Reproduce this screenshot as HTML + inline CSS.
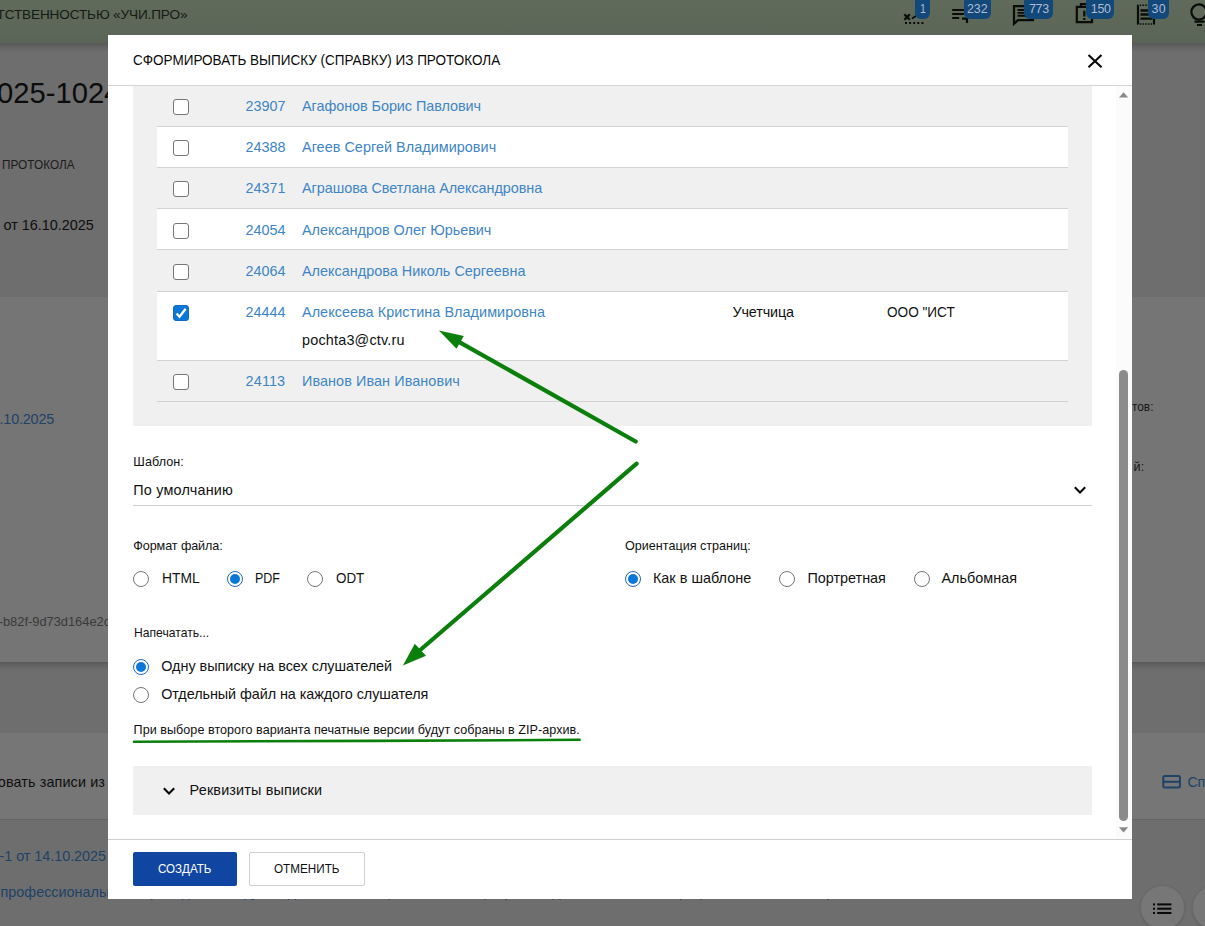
<!DOCTYPE html>
<html lang="ru">
<head>
<meta charset="utf-8">
<title>Сформировать выписку (справку) из протокола</title>
<style>
html,body{margin:0;padding:0;}
body{width:1205px;height:926px;overflow:hidden;position:relative;background:#6e6e6e;font-family:"Liberation Sans",sans-serif;}
.abs{position:absolute;}
.t{position:absolute;white-space:nowrap;line-height:20px;font-family:"Liberation Sans",sans-serif;}
#bg{position:absolute;left:0;top:0;width:1205px;height:926px;overflow:hidden;z-index:0;}
#modal{position:absolute;left:108px;top:35px;width:1024px;height:864px;background:#fff;z-index:5;overflow:hidden;}
#mt{position:absolute;left:0;top:0;width:1205px;height:926px;z-index:6;overflow:hidden;}
#mt .t{z-index:6;}
#bg .t{z-index:3;}
.band{position:absolute;left:0;width:1205px;}
.badge{position:absolute;top:-6px;height:24.6px;background:#12487a;border-radius:6px;z-index:2;}
.row{position:absolute;left:49px;width:911px;border-bottom:1px solid #d2d2d2;box-sizing:border-box;}
.row.w{background:#fff;}
.cb{position:absolute;width:16px;height:16px;box-sizing:border-box;border:1px solid #767676;border-radius:3px;background:#fff;left:173px;}
.cb.on{background:#0a78d8;border-color:#1468bd;}
.rd{position:absolute;width:16px;height:16px;box-sizing:border-box;border:1px solid #767676;border-radius:50%;background:#fff;}
.rd.on{border:1px solid #2268b8;}
.rd.on::after{content:"";position:absolute;left:2px;top:2px;width:10px;height:10px;border-radius:50%;background:#0a78d8;}
svg{position:absolute;overflow:visible;}
</style>
</head>
<body>
<div id="bg">
  <!-- page background bands (already dimmed by overlay) -->
  <div class="band" style="top:0;height:296.5px;background:#6e6e6e;"></div>
  <div class="band" style="top:296.5px;height:365.5px;background:#757575;"></div>
  <div class="band" style="top:662px;height:70.6px;background:linear-gradient(#595959 0,#626262 3px,#6b6b6b 7px,#6e6e6e 10px,#6e6e6e 100%);"></div>
  <div class="band" style="top:732.6px;height:86.4px;background:#767676;"></div>
  <div class="band" style="top:819px;height:107px;background:#6e6e6e;border-top:1px solid #646464;box-sizing:border-box;"></div>
  <!-- app header -->
  <div class="band" style="top:43px;height:10px;background:linear-gradient(#575757 0,#606060 3px,#6a6a6a 7px,#6e6e6e 10px);z-index:1;"></div>
  <div class="band" style="top:0;height:43px;background:linear-gradient(#5f6a5b 0,#5d6859 50%,#5a6557 100%);z-index:1;"></div>
  <div id="hdr" style="position:absolute;left:0;top:0;width:1205px;height:43px;z-index:2;">
<div class="badge" style="left:915.0px;width:15.0px"></div>
<div class="badge" style="left:963.6px;width:27.4px"></div>
<div class="badge" style="left:1024.3px;width:28.7px"></div>
<div class="badge" style="left:1086.0px;width:27.8px"></div>
<div class="badge" style="left:1147.7px;width:21.1px"></div>

    <svg id="icons" width="1205" height="43" viewBox="0 0 1205 43" style="left:0;top:0;z-index:1" fill="none" stroke="#0a0c09" stroke-width="2.2">
      <!-- icon 1: x + dotted line -->
      <path d="M904.4 14.4l5.4 5.4M909.8 14.4l-5.4 5.4" stroke-width="2.2"/>
      <path d="M912 18.5l4-2.5" stroke-width="2"/>
      <path d="M905 23h19" stroke-dasharray="2 2.1"/>
      <!-- icon 2: playlist add -->
      <path d="M952.2 10h12M952.2 14h12M952.2 18h7M962 18.6h5v4.4"/>
      <!-- icon 3: chat -->
      <path d="M1014 6.2h19v14h-15l-4 3.6z"/>
      <path d="M1017.5 10h13M1017.5 12.9h13M1017.5 15.8h9" stroke-width="1.9"/>
      <!-- icon 4: assignment late -->
      <path d="M1076.8 6.8h15.2v15.4h-15.2z"/>
      <path d="M1081 6.5v-2.5h7v2.5" />
      <path d="M1084.3 10.8v5.6M1084.3 18v2"/>
      <!-- icon 5: receipt -->
      <path d="M1138 5.4v18.6M1154 5.4v18.6" />
      <path d="M1137 5.2h18M1137 24h18" stroke-dasharray="1.5 1.2" stroke-width="1.6"/>
      <path d="M1140.5 10.5h12M1140.5 14.5h12M1140.5 18.6h12" stroke-width="2.4"/>
      <!-- icon 6: bulb -->
      <circle cx="1199" cy="12" r="7.6"/>
      <path d="M1194.5 21.6h10M1197 25h5" />
    </svg>
  </div>
<span class="t" id="h1" style="left:-3.50px;top:5.19px;font-size:13.6px;color:#161a14;letter-spacing:-0.139px;">ТСТВЕННОСТЬЮ «УЧИ.ПРО»</span>
<span class="t" id="num" style="left:-3.00px;top:83.48px;font-size:29.2px;color:#0c0c0c;">025-1024</span>
<span class="t" id="prot" style="left:2.10px;top:154.57px;font-size:12.5px;color:#1c1c1c;transform:scaleX(0.9442);transform-origin:0 50%;">ПРОТОКОЛА</span>
<span class="t" id="ot" style="left:3.60px;top:214.71px;font-size:14.4px;color:#0e0e0e;letter-spacing:-0.009px;">от 16.10.2025</span>
<span class="t" id="d10" style="left:-0.50px;top:408.91px;font-size:14.4px;color:#1e4268;letter-spacing:-0.186px;">.10.2025</span>
<span class="t" id="uuid" style="left:-1.30px;top:611.95px;font-size:12.85px;color:#3a3a3a;">-b82f-9d73d164e2c5</span>
<span class="t" id="zap" style="left:-2.20px;top:772.01px;font-size:14.4px;color:#0e0e0e;letter-spacing:0.107px;">овать записи из</span>
<span class="t" id="l1" style="left:-0.50px;top:846.01px;font-size:14.4px;color:#1e4268;letter-spacing:-0.040px;">-1 от 14.10.2025</span>
<span class="t" id="l2" style="left:0.50px;top:881.61px;font-size:14.4px;color:#1e4268;">профессиональная переподготовка руководителей и специалистов по программе дополнительного профессионального образования</span>
<span class="t" id="tov" style="left:1131.50px;top:396.63px;font-size:12.6px;color:#161616;transform:scaleX(0.9391);transform-origin:0 50%;">тов:</span>
<span class="t" id="iy" style="left:1133.60px;top:457.33px;font-size:12.6px;color:#161616;">й:</span>
<span class="t" id="sp" style="left:1187.60px;top:771.61px;font-size:14.4px;color:#1e4268;letter-spacing:-0.6px;">Список</span>
<span class="t" id="bd0" style="left:919.50px;top:-1.20px;font-size:12.4px;color:#b2bccf;transform:scaleX(0.8571);transform-origin:0 50%;z-index:3;">1</span>
<span class="t" id="bd1" style="left:967.00px;top:-1.20px;font-size:12.4px;color:#b2bccf;letter-spacing:-0.050px;z-index:3;">232</span>
<span class="t" id="bd2" style="left:1029.00px;top:-1.20px;font-size:12.4px;color:#b2bccf;letter-spacing:-0.288px;z-index:3;">773</span>
<span class="t" id="bd3" style="left:1090.80px;top:-1.20px;font-size:12.4px;color:#b2bccf;letter-spacing:-0.312px;z-index:3;">150</span>
<span class="t" id="bd4" style="left:1151.60px;top:-1.20px;font-size:12.4px;color:#b2bccf;letter-spacing:0.200px;z-index:3;">30</span>
  <!-- "Список" icon -->
  <svg width="20" height="16" viewBox="0 0 20 16" style="left:1162px;top:774px" fill="none" stroke="#1e4268" stroke-width="2"><rect x="1.3" y="2" width="16.6" height="11.6" rx="1.5"/><path d="M1.3 7.8h16.6"/></svg>
  <!-- floating buttons -->
  <div class="abs" style="left:1140.5px;top:885.5px;width:43px;height:43px;border-radius:50%;background:#777;box-shadow:0 0 0 1px #6a6a6a,0 1px 3px rgba(0,0,0,.25);"></div>
  <div class="abs" style="left:1193px;top:885.5px;width:43px;height:43px;border-radius:50%;background:#777;box-shadow:0 0 0 1px #6a6a6a,0 1px 3px rgba(0,0,0,.25);"></div>
  <svg width="20" height="12" viewBox="0 0 20 12" style="left:1152.6px;top:903.2px" fill="#080808"><rect x="0" y="0.4" width="2" height="2"/><rect x="0" y="4.7" width="2" height="2"/><rect x="0" y="9" width="2" height="2"/><rect x="4.2" y="0.4" width="14.2" height="2"/><rect x="4.2" y="4.7" width="14.2" height="2"/><rect x="4.2" y="9" width="14.2" height="2"/></svg>
</div>

<div id="modal">
  <!-- header border -->
  <div class="abs" style="left:0;top:50px;width:1024px;height:1px;background:#d4d4d4;"></div>
  <!-- grey list panel -->
  <div class="abs" style="left:25px;top:51px;width:959px;height:339.6px;background:#f0f0f0;"></div>
  <div class="row" style="top:51px;height:41px;"></div>
  <div class="row w" style="top:92px;height:41px;"></div>
  <div class="row" style="top:133px;height:41px;"></div>
  <div class="row w" style="top:174px;height:41px;"></div>
  <div class="row" style="top:215px;height:42px;"></div>
  <div class="row w" style="top:257px;height:68.5px;"></div>
  <div class="row" style="top:325.5px;height:41.5px;"></div>
  <!-- select underline -->
  <div class="abs" style="left:25px;top:470px;width:959px;height:1px;background:#cfcfcf;"></div>
  <!-- accordion -->
  <div class="abs" style="left:25px;top:731px;width:959px;height:48.6px;background:#f0f0f0;"></div>
  <!-- footer -->
  <div class="abs" style="left:0;top:804px;width:1024px;height:1px;background:#d0d0d0;"></div>
  <div class="abs" style="left:25px;top:817.2px;width:103.8px;height:33.6px;background:#1046a2;border-radius:2px;"></div>
  <div class="abs" style="left:141px;top:817.2px;width:115.6px;height:33.6px;background:#fff;border:1px solid #cfcfcf;border-radius:2px;box-sizing:border-box;"></div>
  <!-- scrollbar -->
  <div class="abs" style="left:1008px;top:51px;width:16px;height:753px;background:#fbfbfb;"></div>
  <div class="abs" style="left:1011px;top:335px;width:9px;height:451px;border-radius:4.5px;background:#8b8b8b;"></div>
  <svg width="10" height="6" viewBox="0 0 10 6" style="left:1010.9px;top:56.8px"><path d="M0 5.4L4.6 0.2L9.2 5.4z" fill="#8a8a8a"/></svg>
  <svg width="10" height="6" viewBox="0 0 10 6" style="left:1010.9px;top:792px"><path d="M0 0.2L4.6 5.4L9.2 0.2z" fill="#8a8a8a"/></svg>
</div>

<div id="mt">
<span class="t" id="title" style="left:133.00px;top:50.41px;font-size:14.4px;color:#0a0a0a;transform:scaleX(0.9391);transform-origin:0 50%;">СФОРМИРОВАТЬ ВЫПИСКУ (СПРАВКУ) ИЗ ПРОТОКОЛА</span>
<span class="t" id="id0" style="left:245.60px;top:96.11px;font-size:14.4px;color:#3d85c6;">23907</span>
<span class="t" id="nm0" style="left:302.00px;top:96.11px;font-size:14.4px;color:#3d85c6;letter-spacing:-0.047px;">Агафонов Борис Павлович</span>
<span class="t" id="id1" style="left:245.60px;top:137.21px;font-size:14.4px;color:#3d85c6;">24388</span>
<span class="t" id="nm1" style="left:302.00px;top:137.21px;font-size:14.4px;color:#3d85c6;letter-spacing:0.043px;">Агеев Сергей Владимирович</span>
<span class="t" id="id2" style="left:245.60px;top:178.41px;font-size:14.4px;color:#3d85c6;">24371</span>
<span class="t" id="nm2" style="left:302.00px;top:178.41px;font-size:14.4px;color:#3d85c6;letter-spacing:-0.041px;">Аграшова Светлана Александровна</span>
<span class="t" id="id3" style="left:245.60px;top:219.51px;font-size:14.4px;color:#3d85c6;">24054</span>
<span class="t" id="nm3" style="left:302.00px;top:219.51px;font-size:14.4px;color:#3d85c6;letter-spacing:-0.009px;">Александров Олег Юрьевич</span>
<span class="t" id="id4" style="left:245.60px;top:260.91px;font-size:14.4px;color:#3d85c6;">24064</span>
<span class="t" id="nm4" style="left:302.00px;top:260.91px;font-size:14.4px;color:#3d85c6;letter-spacing:0.022px;">Александрова Николь Сергеевна</span>
<span class="t" id="id5" style="left:245.60px;top:302.01px;font-size:14.4px;color:#3d85c6;">24444</span>
<span class="t" id="nm5" style="left:302.00px;top:302.01px;font-size:14.4px;color:#3d85c6;letter-spacing:0.057px;">Алексеева Кристина Владимировна</span>
<span class="t" id="id6" style="left:245.60px;top:370.61px;font-size:14.4px;color:#3d85c6;letter-spacing:0.141px;">24113</span>
<span class="t" id="nm6" style="left:302.00px;top:370.61px;font-size:14.4px;color:#3d85c6;letter-spacing:0.086px;">Иванов Иван Иванович</span>
<span class="t" id="mail" style="left:302.00px;top:330.21px;font-size:14.4px;color:#111;letter-spacing:0.196px;">pochta3@ctv.ru</span>
<span class="t" id="uch" style="left:732.40px;top:302.01px;font-size:14.4px;color:#111;letter-spacing:-0.126px;">Учетчица</span>
<span class="t" id="ooo" style="left:887.20px;top:302.01px;font-size:14.4px;color:#111;transform:scaleX(0.9444);transform-origin:0 50%;">ООО "ИСТ</span>
<span class="t" id="shab" style="left:133.30px;top:452.23px;font-size:12.6px;color:#111;letter-spacing:0.050px;">Шаблон:</span>
<span class="t" id="def" style="left:133.30px;top:480.11px;font-size:14.4px;color:#111;letter-spacing:0.205px;">По умолчанию</span>
<span class="t" id="fmt" style="left:133.30px;top:535.93px;font-size:12.6px;color:#111;letter-spacing:-0.089px;">Формат файла:</span>
<span class="t" id="html" style="left:161.60px;top:567.91px;font-size:14.4px;color:#111;transform:scaleX(0.9590);transform-origin:0 50%;">HTML</span>
<span class="t" id="pdf" style="left:254.80px;top:567.91px;font-size:14.4px;color:#111;transform:scaleX(0.8690);transform-origin:0 50%;">PDF</span>
<span class="t" id="odt" style="left:335.60px;top:567.91px;font-size:14.4px;color:#111;transform:scaleX(0.9300);transform-origin:0 50%;">ODT</span>
<span class="t" id="ori" style="left:625.00px;top:535.93px;font-size:12.6px;color:#111;">Ориентация страниц:</span>
<span class="t" id="o1" style="left:652.90px;top:567.91px;font-size:14.4px;color:#111;letter-spacing:0.027px;">Как в шаблоне</span>
<span class="t" id="o2" style="left:807.50px;top:567.91px;font-size:14.4px;color:#111;letter-spacing:-0.013px;">Портретная</span>
<span class="t" id="o3" style="left:941.50px;top:567.91px;font-size:14.4px;color:#111;letter-spacing:0.018px;">Альбомная</span>
<span class="t" id="nap" style="left:133.60px;top:623.33px;font-size:12.6px;color:#111;transform:scaleX(0.9641);transform-origin:0 50%;">Напечатать...</span>
<span class="t" id="p1" style="left:161.20px;top:656.21px;font-size:14.4px;color:#111;letter-spacing:-0.003px;">Одну выписку на всех слушателей</span>
<span class="t" id="p2" style="left:161.20px;top:684.21px;font-size:14.4px;color:#111;letter-spacing:-0.067px;">Отдельный файл на каждого слушателя</span>
<span class="t" id="note" style="left:133.60px;top:720.13px;font-size:12.6px;color:#111;letter-spacing:0.028px;">При выборе второго варианта печатные версии будут собраны в ZIP-архив.</span>
<span class="t" id="rekv" style="left:189.60px;top:779.81px;font-size:14.4px;color:#111;letter-spacing:0.158px;">Реквизиты выписки</span>
<span class="t" id="bt1" style="left:158.40px;top:858.63px;font-size:13.2px;color:#fff;transform:scaleX(0.8770);transform-origin:0 50%;">СОЗДАТЬ</span>
<span class="t" id="bt2" style="left:274.00px;top:858.63px;font-size:13.2px;color:#111;transform:scaleX(0.8878);transform-origin:0 50%;">ОТМЕНИТЬ</span>
  <!-- checkboxes -->
  <div class="cb" style="top:99px"></div>
  <div class="cb" style="top:140px"></div>
  <div class="cb" style="top:181px"></div>
  <div class="cb" style="top:223px"></div>
  <div class="cb" style="top:263.5px"></div>
  <div class="cb on" style="top:305px"><svg width="16" height="16" viewBox="0 0 16 16" style="left:-1px;top:-1px" fill="none" stroke="#fff" stroke-width="2.3"><path d="M3.6 8.6L6.5 11.8L12.7 3.8"/></svg></div>
  <div class="cb" style="top:373.5px"></div>
  <!-- radios -->
  <div class="rd" style="left:133px;top:571px"></div>
  <div class="rd on" style="left:227px;top:571px"></div>
  <div class="rd" style="left:307px;top:571px"></div>
  <div class="rd on" style="left:625px;top:571px"></div>
  <div class="rd" style="left:779px;top:571px"></div>
  <div class="rd" style="left:914px;top:571px"></div>
  <div class="rd on" style="left:133px;top:659px"></div>
  <div class="rd" style="left:133px;top:687px"></div>
  <!-- icons -->
  <svg width="17" height="16" viewBox="0 0 17 16" style="left:1087px;top:53px" fill="none" stroke="#0a0a0a" stroke-width="2.1"><path d="M1.5 1.9l13 12.4M14.5 1.9L1.5 14.3"/></svg>
  <svg width="14" height="10" viewBox="0 0 14 10" style="left:1073px;top:485px" fill="none" stroke="#0a0a0a" stroke-width="2.1"><path d="M1.8 2.2L7 7.4L12.2 2.2"/></svg>
  <svg width="14" height="10" viewBox="0 0 14 10" style="left:162.4px;top:786px" fill="none" stroke="#0a0a0a" stroke-width="2.1"><path d="M1.8 2.2L7 7.4L12.2 2.2"/></svg>
  <!-- annotation arrows -->
  <svg id="arrows" width="1205" height="926" viewBox="0 0 1205 926" style="left:0;top:0;z-index:8" fill="none" stroke="#0b7f0b" stroke-width="4.2" stroke-linecap="round">
    <path d="M635.7 441.5L458 341.3"/>
    <path d="M438.9 330.5L463.8 335.9L456.5 348.8z" fill="#0b7f0b" stroke="none"/>
    <path d="M636.6 463.7L418.5 651.5"/>
    <path d="M402.9 665.6L414.8 643.7L426 655.7z" fill="#0b7f0b" stroke="none"/>
    <path d="M134 741.7C250 741.6 450 740.6 579.6 739.8" stroke-width="2.6"/>
  </svg>
</div>
</body>
</html>
